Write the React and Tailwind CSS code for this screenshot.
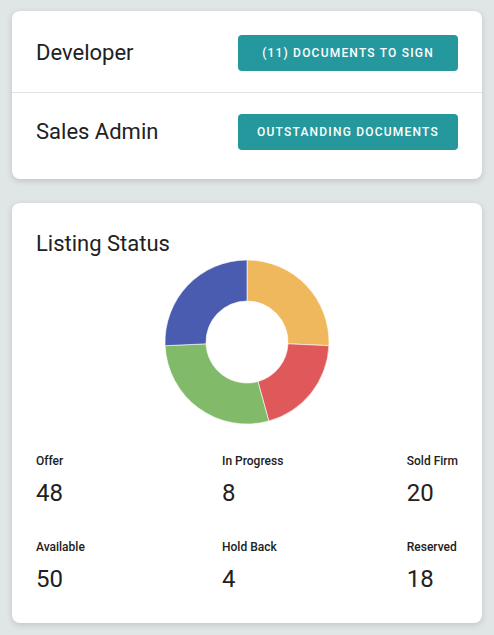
import React from 'react';

const slices = [
  { value: 18, color: '#F0B85C' },
  { value: 14, color: '#DF595B' },
  { value: 20, color: '#81BB69' },
  { value: 18, color: '#4A5CAF' },
];

const stats = [
  { label: 'Offer', value: 48 },
  { label: 'In Progress', value: 8 },
  { label: 'Sold Firm', value: 20 },
  { label: 'Available', value: 50 },
  { label: 'Hold Back', value: 4 },
  { label: 'Reserved', value: 18 },
];

function Donut() {
  const R = 82;
  const r = 41;
  const c = 82;
  const total = slices.reduce((s, x) => s + x.value, 0);
  let start = 0;
  const pt = (rad, a) => [c + rad * Math.sin(a), c - rad * Math.cos(a)];

  return (
    <svg width="164" height="164" viewBox="0 0 164 164">
      {slices.map((s, i) => {
        const end = start + (s.value / total) * Math.PI * 2;
        const [x1, y1] = pt(R, start);
        const [x2, y2] = pt(R, end);
        const [x3, y3] = pt(r, end);
        const [x4, y4] = pt(r, start);
        const large = end - start > Math.PI ? 1 : 0;
        const d = `M${x1} ${y1} A${R} ${R} 0 ${large} 1 ${x2} ${y2} L${x3} ${y3} A${r} ${r} 0 ${large} 0 ${x4} ${y4} Z`;
        start = end;
        return <path key={i} d={d} fill={s.color} stroke="#fff" strokeWidth="0.6" />;
      })}
    </svg>
  );
}

function RoleRow({ name, action, className }) {
  return (
    <div className={`flex items-center justify-between px-6 ${className}`}>
      <span className="text-[22px] leading-7 text-[#212121]">{name}</span>
      <button className="h-9 w-[220px] rounded bg-[#25989e] text-[12px] font-medium uppercase tracking-[0.1em] text-white">
        {action}
      </button>
    </div>
  );
}

export default function App() {
  return (
    <div
      className="min-h-screen bg-[#e0e6e6] px-3 pt-[11px] pb-3"
      style={{ fontFamily: 'Roboto, "Liberation Sans", sans-serif' }}
    >
      {/* Roles card */}
      <div className="rounded-lg bg-white shadow-[0_2px_6px_rgba(0,0,0,0.15)]">
        <RoleRow name="Developer" action="(11) Documents to sign" className="pt-6 pb-[21px] border-b border-[#e2e2e2]" />
        <RoleRow name="Sales Admin" action="Outstanding documents" className="pt-[21px] pb-[29px]" />
      </div>

      {/* Listing status card */}
      <div className="mt-6 rounded-lg bg-white px-6 pt-[27px] pb-7 shadow-[0_2px_6px_rgba(0,0,0,0.15)]">
        <h2 className="text-[22px] leading-7 font-normal text-[#212121]">Listing Status</h2>
        <div className="mt-[2px] flex justify-center">
          <Donut />
        </div>
        <div className="mt-[29px] grid grid-cols-[186px_1fr_auto] gap-y-[30px] text-[#212121]">
          {stats.map((s) => (
            <div key={s.label} className="flex flex-col">
              <span className="text-[12px] leading-4 font-medium">{s.label}</span>
              <span className="mt-2 text-[24px] leading-8">{s.value}</span>
            </div>
          ))}
        </div>
      </div>
    </div>
  );
}
